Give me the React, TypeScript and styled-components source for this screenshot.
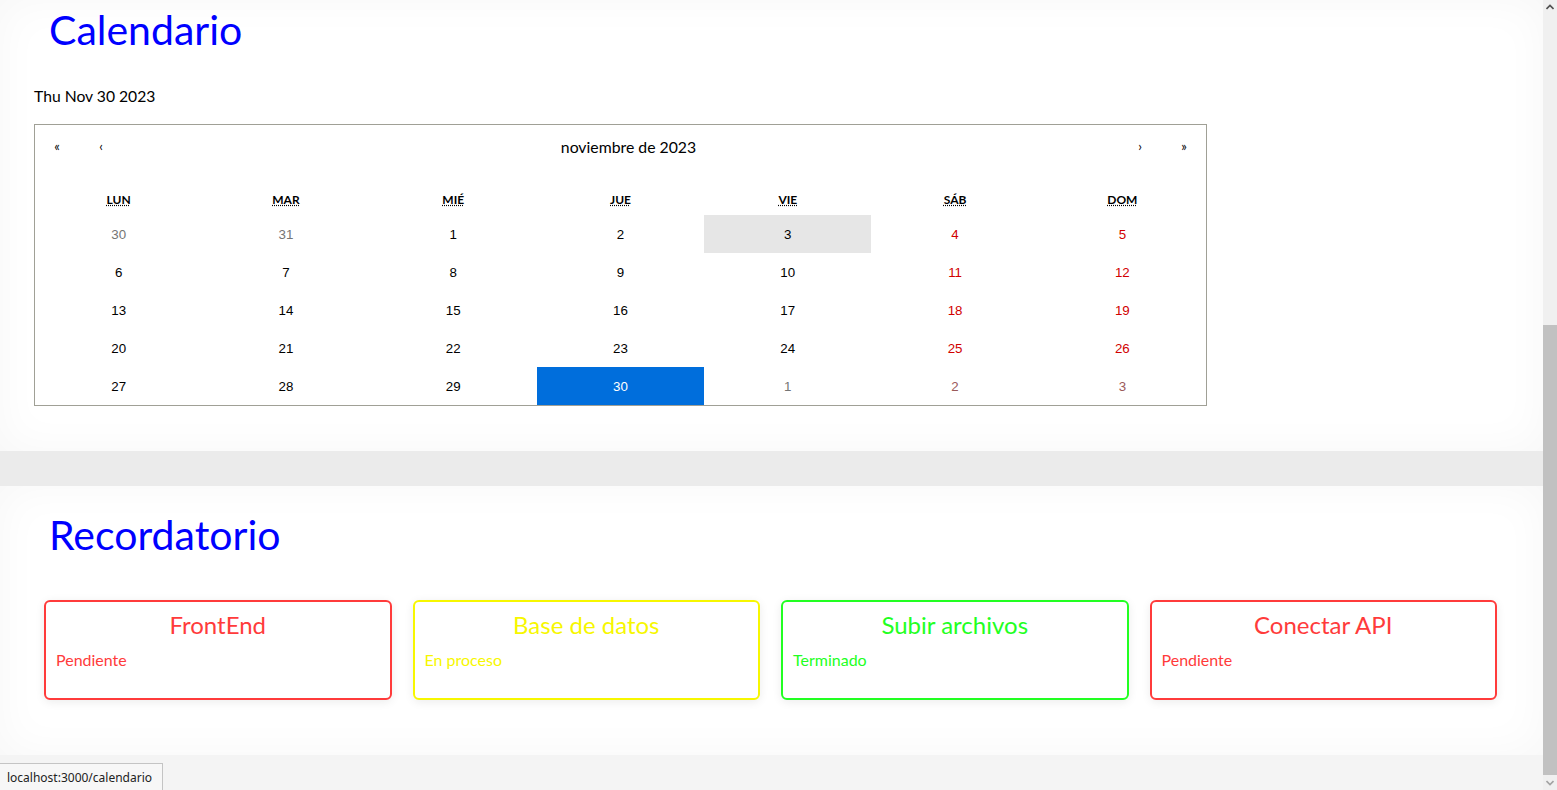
import React from "react";
import styled, { createGlobalStyle } from "styled-components";

const Global = createGlobalStyle`
  html, body { margin: 0; padding: 0; overflow: hidden; height: 100%; }
  body { background: #ebebeb; font-family: Lato, "Noto Sans", sans-serif; color: #000; }
  * { box-sizing: border-box; }
`;

const Page = styled.div`
  display: flex;
  flex-direction: column;
  gap: 35px;
  width: 1543px;
  height: 790px;
`;

const Section = styled.section<{ $h: number; $pt: number }>`
  background: #ffffff;
  box-shadow: inset 0 0 45px rgba(0, 0, 0, 0.035);
  height: ${(p) => p.$h}px;
  padding: ${(p) => p.$pt}px 0 0 34px;
  flex-shrink: 0;
`;

const Heading = styled.h1`
  margin: 0 0 0 15px;
  font-family: Lato, sans-serif;
  font-weight: 400;
  font-size: 41px;
  line-height: 48px;
  color: #0000ff;
`;

const DateLine = styled.p`
  margin: 33px 0 18px;
  font-size: 15.7px;
  line-height: 19px;
`;

const Calendar = styled.div`
  width: 1173px;
  border: 1px solid #a0a096;
  background: #fff;
`;

const Nav = styled.div`
  display: flex;
  height: 44px;
  margin-bottom: 16px;
`;

const NavButton = styled.button`
  min-width: 44px;
  border: 0;
  margin: 0;
  padding: 0 0 2px;
  background: none;
  font-family: Lato, sans-serif;
  font-size: 13px;
  color: #000;
`;

const NavLabel = styled(NavButton)`
  flex-grow: 1;
  padding-left: 16px;
  font-size: 15.8px;
`;

const Grid = styled.div`
  display: grid;
  grid-template-columns: repeat(7, 1fr);
`;

const Weekday = styled.div`
  height: 30px;
  padding-bottom: 2px;
  display: flex;
  align-items: center;
  justify-content: center;
  font-size: 12px;
  font-weight: 700;
  text-transform: uppercase;
`;

const Abbr = styled.abbr`
  text-decoration: underline dotted;
`;

type Tone = "normal" | "weekend" | "neighbor" | "neighborWeekend" | "hover" | "active";

const toneColor: Record<Tone, string> = {
  normal: "#000",
  weekend: "#d10000",
  neighbor: "#757575",
  neighborWeekend: "#9a5a5a",
  hover: "#000",
  active: "#fff",
};

const Tile = styled.button<{ $tone: Tone }>`
  height: 38px;
  margin: 0;
  border: 0;
  padding: 0;
  font-family: "Liberation Sans", Arial, sans-serif;
  font-size: 13.333px;
  text-align: center;
  color: ${(p) => toneColor[p.$tone]};
  background: ${(p) =>
    p.$tone === "active" ? "#006edc" : p.$tone === "hover" ? "#e6e6e6" : "transparent"};
`;

const Cards = styled.div`
  display: grid;
  grid-template-columns: repeat(4, 1fr);
  gap: 21px;
  width: 1453px;
  margin: 41px 0 0 10px;
`;

const Card = styled.div<{ $c: string }>`
  height: 100px;
  border: 2px solid ${(p) => p.$c};
  border-radius: 6px;
  padding: 8px 10px;
  background: #fff;
  box-shadow: 0 2px 10px rgba(0, 0, 0, 0.08);
  color: ${(p) => p.$c};
`;

const CardTitle = styled.div`
  font-size: 24px;
  line-height: 29px;
  text-align: center;
  margin-bottom: 11px;
`;

const CardStatus = styled.div`
  font-size: 16px;
  line-height: 19px;
`;

const Footer = styled.div`
  flex: 1;
  margin-top: -35px;
  background: #f4f4f4;
`;

const StatusBar = styled.div`
  position: fixed;
  left: 0;
  bottom: 0;
  height: 27px;
  width: 163px;
  padding: 0 0 0 7px;
  display: flex;
  align-items: center;
  background: #f7f7f7;
  border-top: 1px solid #c4c4c4;
  border-right: 1px solid #c4c4c4;
  font-family: "Noto Sans", "Open Sans", sans-serif;
  font-size: 12px;
  color: #222;
`;

const Scrollbar = styled.div`
  position: fixed;
  top: 0;
  right: 0;
  width: 14px;
  height: 790px;
  background: #f0f0f0;
`;

const Thumb = styled.div`
  position: absolute;
  left: 0;
  top: 325px;
  width: 14px;
  height: 450px;
  background: #c1c1c1;
`;

const Arrow = styled.svg<{ $pos: "top" | "bottom" }>`
  position: absolute;
  left: 3px;
  ${(p) => (p.$pos === "top" ? "top: 4px;" : "bottom: 4px;")}
`;

const weekdays = [
  ["LUN", "lunes"],
  ["MAR", "martes"],
  ["MIÉ", "miércoles"],
  ["JUE", "jueves"],
  ["VIE", "viernes"],
  ["SÁB", "sábado"],
  ["DOM", "domingo"],
];

const rows = [
  [30, 31, 1, 2, 3, 4, 5],
  [6, 7, 8, 9, 10, 11, 12],
  [13, 14, 15, 16, 17, 18, 19],
  [20, 21, 22, 23, 24, 25, 26],
  [27, 28, 29, 30, 1, 2, 3],
];

function toneFor(r: number, c: number): Tone {
  const neighbor = (r === 0 && c < 2) || (r === 4 && c > 3);
  if (r === 0 && c === 4) return "hover";
  if (r === 4 && c === 3) return "active";
  if (neighbor) return c >= 5 ? "neighborWeekend" : "neighbor";
  return c >= 5 ? "weekend" : "normal";
}

const tasks = [
  { title: "FrontEnd", status: "Pendiente", color: "#ff3b3b" },
  { title: "Base de datos", status: "En proceso", color: "#f7f700" },
  { title: "Subir archivos", status: "Terminado", color: "#22ff22" },
  { title: "Conectar API", status: "Pendiente", color: "#ff3b3b" },
];

export default function App() {
  return (
    <>
      <Global />
      <Page>
        <Section $h={451} $pt={6}>
          <Heading>Calendario</Heading>
          <DateLine>Thu Nov 30 2023</DateLine>
          <Calendar>
            <Nav>
              <NavButton>«</NavButton>
              <NavButton>‹</NavButton>
              <NavLabel>noviembre de 2023</NavLabel>
              <NavButton>›</NavButton>
              <NavButton>»</NavButton>
            </Nav>
            <Grid>
              {weekdays.map(([a, t]) => (
                <Weekday key={a}>
                  <Abbr title={t}>{a}</Abbr>
                </Weekday>
              ))}
              {rows.map((row, r) =>
                row.map((d, c) => (
                  <Tile key={`${r}-${c}`} $tone={toneFor(r, c)}>
                    {d}
                  </Tile>
                ))
              )}
            </Grid>
          </Calendar>
        </Section>
        <Section $h={269} $pt={25}>
          <Heading>Recordatorio</Heading>
          <Cards>
            {tasks.map((t) => (
              <Card key={t.title} $c={t.color}>
                <CardTitle>{t.title}</CardTitle>
                <CardStatus>{t.status}</CardStatus>
              </Card>
            ))}
          </Cards>
        </Section>
        <Footer />
      </Page>
      <StatusBar>localhost:3000/calendario</StatusBar>
      <Scrollbar>
        <Arrow $pos="top" width="8" height="6" viewBox="0 0 8 6">
          <path d="M0.5 5 L4 1.5 L7.5 5" fill="none" stroke="#505050" strokeWidth="1.6" />
        </Arrow>
        <Thumb />
        <Arrow $pos="bottom" width="8" height="6" viewBox="0 0 8 6">
          <path d="M0.5 1 L4 4.5 L7.5 1" fill="none" stroke="#a3a3a3" strokeWidth="1.6" />
        </Arrow>
      </Scrollbar>
    </>
  );
}
